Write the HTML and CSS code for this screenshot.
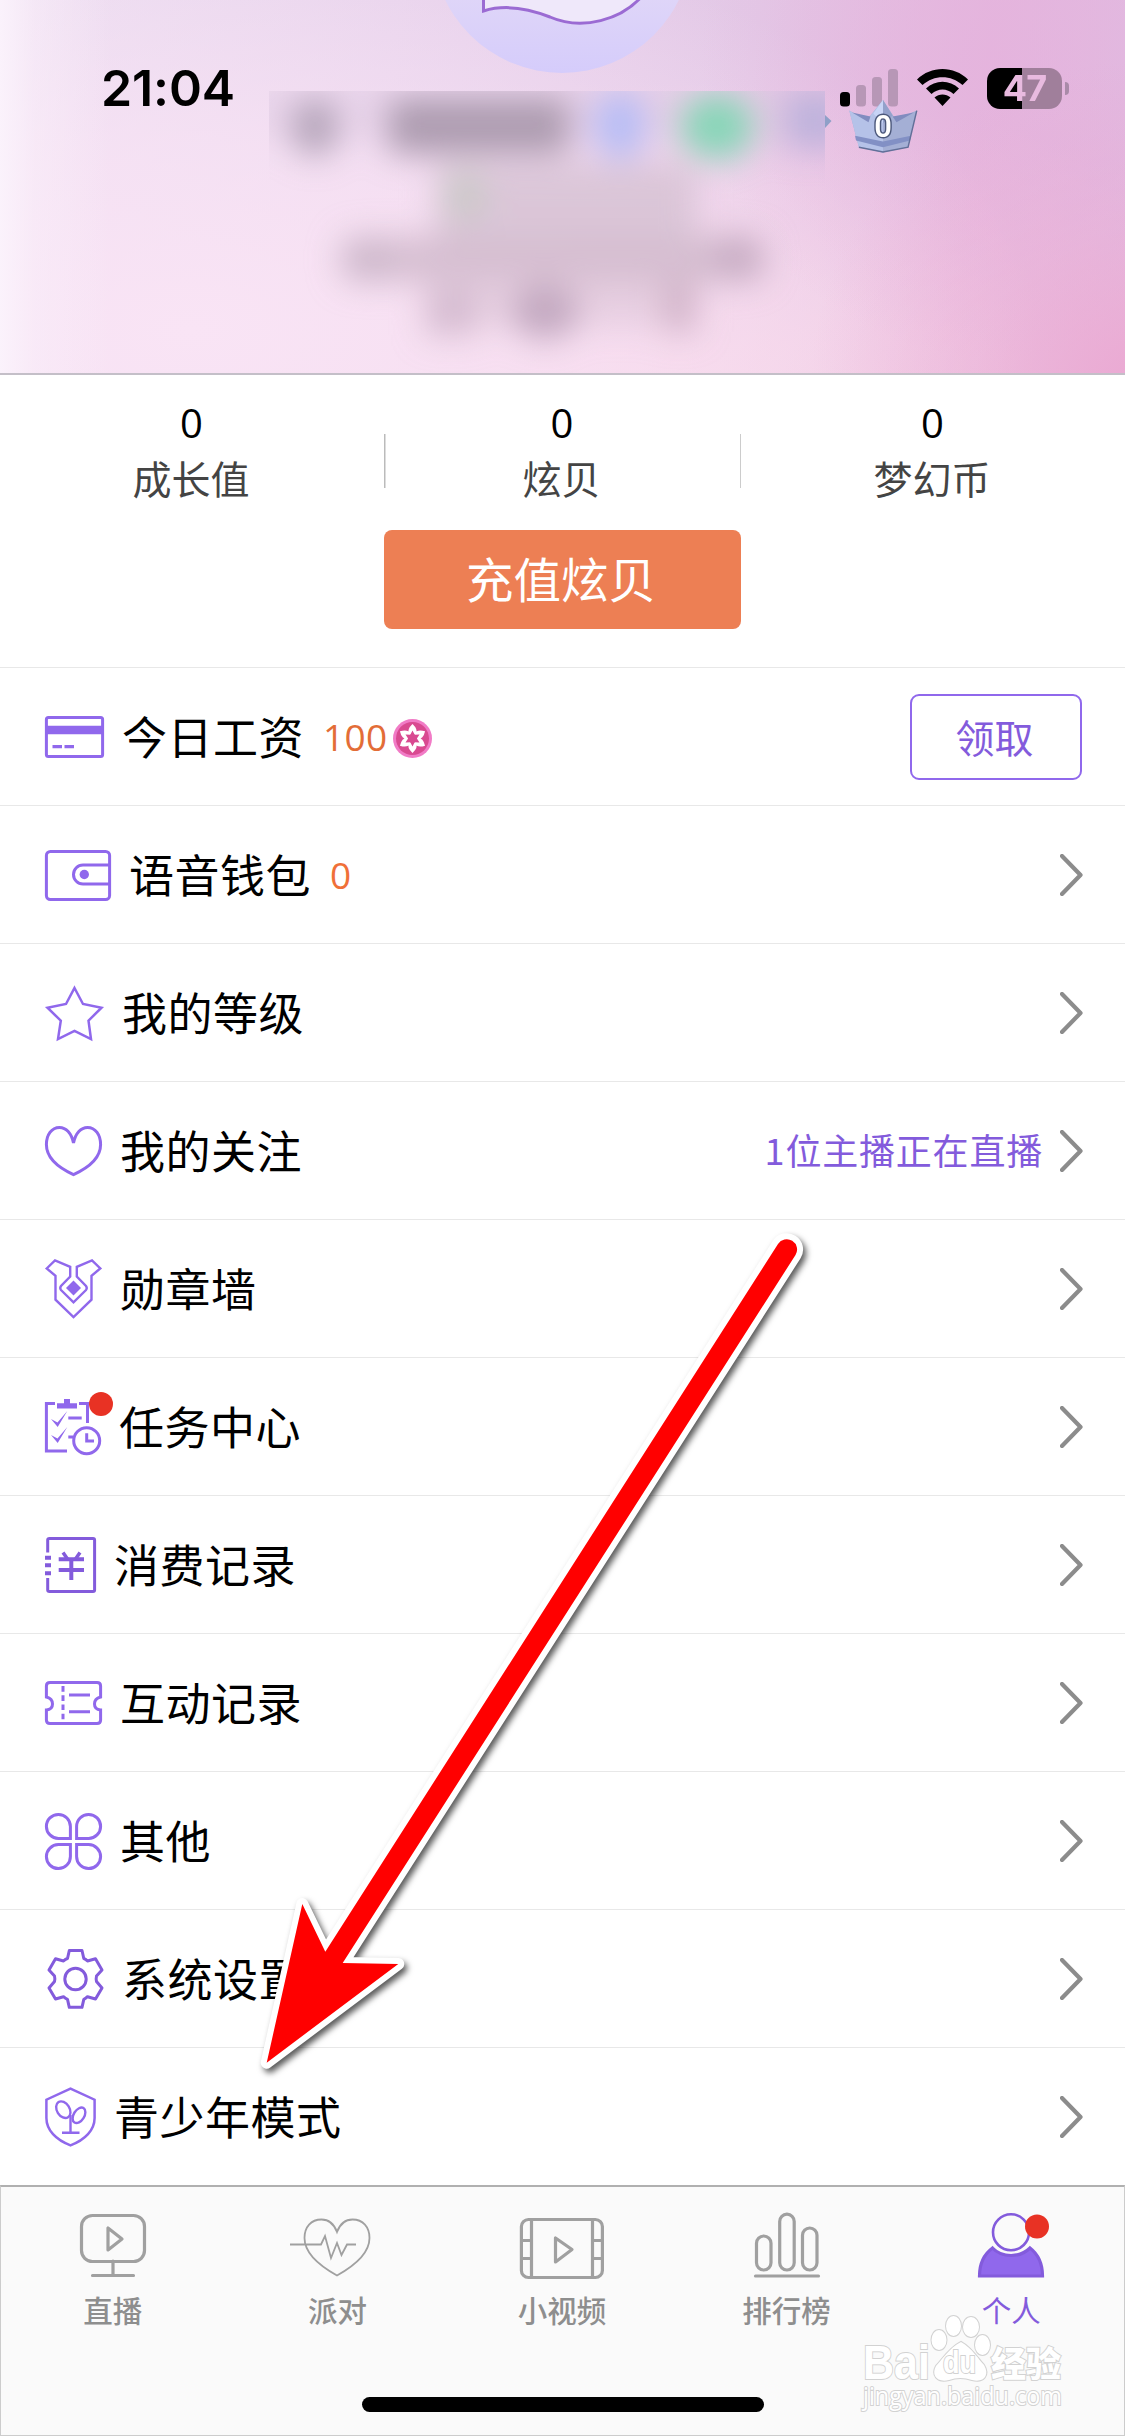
FILE: index.html
```html
<!DOCTYPE html>
<html lang="zh-CN">
<head>
<meta charset="utf-8">
<title>个人</title>
<link rel="stylesheet" href="styles.css">
</head>
<body>
<svg class="defs" width="0" height="0" aria-hidden="true">
  <symbol id="chevron" viewBox="0 0 23 42"><path d="M2 2 20.500 21 2 40" fill="none" stroke="#8c8c8c" stroke-width="4.200" stroke-linecap="round" stroke-linejoin="round"/></symbol>
</svg>
<div class="screen">
  <header class="hero">
    <svg class="hero-art" viewBox="0 0 1125 373">
      <defs>
        <linearGradient id="av" x1="0" y1="0" x2="0" y2="1"><stop offset=".5" stop-color="#e6dcf6"/><stop offset="1" stop-color="#d5ccfb"/></linearGradient>
        <filter id="soft" x="-30%" y="-60%" width="160%" height="220%"><feGaussianBlur stdDeviation="16"/></filter>
        <clipPath id="band"><rect x="269" y="91" width="556" height="282"/></clipPath>
      </defs>
      <circle cx="562" cy="-57" r="130" fill="url(#av)"/>
      <path d="M483.500-5V11C506 4 530 9 550 17C582 31 622 20 643-5Z" fill="#efe8fa" stroke="#9b6bd3" stroke-width="3"/>
      <g clip-path="url(#band)">
        <g filter="url(#soft)">
          <rect x="250" y="80" width="590" height="60" fill="#dcc8e0" opacity=".45"/>
          <ellipse cx="315" cy="127" rx="24" ry="29" fill="#b5a5ba"/>
          <rect x="388" y="98" width="182" height="56" rx="12" fill="#ad9cb0"/>
          <ellipse cx="620" cy="125" rx="27" ry="34" fill="#b7bdf5"/>
          <ellipse cx="717" cy="126" rx="38" ry="33" fill="#88d5b8"/>
          <rect x="785" y="92" width="60" height="56" fill="#beb2dc"/>
          <rect x="436" y="164" width="260" height="76" fill="#d6c2d3" opacity=".85"/>
          <ellipse cx="465" cy="195" rx="22" ry="25" fill="#cbc9c8"/>
          <rect x="340" y="236" width="425" height="46" rx="18" fill="#d0b8cb" opacity=".85"/>
          <ellipse cx="368" cy="260" rx="22" ry="18" fill="#ccb7ca"/>
          <ellipse cx="738" cy="257" rx="26" ry="21" fill="#c6abc2"/>
          <rect x="426" y="276" width="270" height="50" fill="#d8bfd2" opacity=".5"/>
          <rect x="426" y="292" width="50" height="43" fill="#cfb5ca" opacity=".8"/>
          <ellipse cx="545" cy="312" rx="34" ry="27" fill="#c2a8c0"/>
          <rect x="665" y="282" width="30" height="50" fill="#d0b2c7"/>
        </g>
      </g>
      <path d="M825 115 831.500 121 825 128Z" fill="#8fa0c8"/>
    </svg>
    <div class="status">
      <span class="time">21:04</span>
      <div class="indicators">
        <svg class="signal" width="58" height="38" viewBox="0 0 58 38"><rect y="23" width="10" height="14.500" rx="3.500"/><g fill="#b797b6"><rect x="16" y="16" width="10" height="21.500" rx="3.500"/><rect x="32" y="8" width="10" height="29.500" rx="3.500"/><rect x="48" y="0" width="10" height="37.500" rx="3.500"/></g></svg>
        <svg class="wifi" width="52" height="38" viewBox="0 0 52 38"><path d="M0 10.500C14-3.500 37-3.500 51 10.500L45.500 16C34 5.500 17 5.500 5.500 16ZM9 19.500C18.500 10.500 32.500 10.500 42 19.500L36.500 25C30 19 21 19 14.500 25ZM17.500 28.500C22 24.500 29 24.500 33.500 28.500L25.500 37Z"/></svg>
        <div class="battery"><span class="level">47</span></div>
        <span class="battery-cap"></span>
      </div>
    </div>
    <svg class="crown" viewBox="0 0 72 56">
      <path d="M1 11 19 21 36 0 49 20 71 11 62 49 36 54.500 11 49Z" fill="#a4afd5"/>
      <path d="M1 11 19 21 36 0V54.500L11 49Z" fill="#b5c2e8"/>
      <path d="M36 0 46 16 36 24Z" fill="#93a1cb"/><path d="M36 0 26 14 36 24Z" fill="#c8d4f6"/>
      <path d="M4 13 23 17 21 23ZM68 13 46 17 50 23Z" fill="#818cbf"/>
      <path d="M7 37 36 43 65 37 64 42 36 49 8 42Z" fill="#8290c5"/>
      <path d="M11 49 36 54 62 49 71 11" fill="none" stroke="#626f98" stroke-width="1.500"/>
      <text x="36" y="38.500" text-anchor="middle">0</text>
    </svg>
  </header>

  <section class="balance">
    <div class="stats">
      <div class="stat"><b>0</b><span>成长值</span></div>
      <div class="stat mid"><b>0</b><span>炫贝</span></div>
      <div class="stat"><b>0</b><span>梦幻币</span></div>
    </div>
    <button class="recharge">充值炫贝</button>
  </section>

  <main class="menu">
    <div class="row">
      <svg class="icon" width="59" height="42"><rect x="1.400" y="1.400" width="56.200" height="39.200" rx="2"/><path d="M1 14H58" stroke-width="8.500"/><path d="M7.500 30.700H17M19.500 30.700H29" stroke-width="3.200"/></svg>
      <span class="label">今日工资</span><span class="num">100</span>
      <svg class="coin" width="39" height="39" viewBox="-19.500 -19.500 39 39"><circle r="19.500" fill="#f17bc6"/><circle r="16.500" fill="#d94a91"/><g fill="#fff"><path d="M0-14.500Q6-9 3.500-4H-3.500Q-6-9 0-14.500Z"/><path transform="rotate(60)" d="M0-14.500Q6-9 3.500-4H-3.500Q-6-9 0-14.500Z"/><path transform="rotate(120)" d="M0-14.500Q6-9 3.500-4H-3.500Q-6-9 0-14.500Z"/><path transform="rotate(180)" d="M0-14.500Q6-9 3.500-4H-3.500Q-6-9 0-14.500Z"/><path transform="rotate(240)" d="M0-14.500Q6-9 3.500-4H-3.500Q-6-9 0-14.500Z"/><path transform="rotate(300)" d="M0-14.500Q6-9 3.500-4H-3.500Q-6-9 0-14.500Z"/></g><path fill="#d94a91" d="M0-8 2.200-3.800 7-4 4.400 0 7 4 2.200 3.800 0 8-2.200 3.800-7 4-4.400 0-7-4-2.200-3.800Z"/></svg>
      <button class="claim">领取</button>
    </div>
    <div class="row">
      <svg class="icon" width="66" height="51"><rect x="1.400" y="1.400" width="63.200" height="48.200" rx="4"/><path d="M65 15H38A9.500 9.500 0 0 0 38 34H65"/><circle class="fill" cx="39.300" cy="24.500" r="4.700"/></svg>
      <span class="label">语音钱包</span><span class="num bright">0</span>
      <svg class="chev"><use href="#chevron"/></svg>
    </div>
    <div class="row">
      <svg class="icon" width="59" height="56"><path stroke-width="2.500" d="M29.500 3 38 19 56.500 22.700 43.500 35.700 46 54 29.500 46 13 54 15.800 35.700 2.500 22.700 21 19Z"/></svg>
      <span class="label">我的等级</span>
      <svg class="chev"><use href="#chevron"/></svg>
    </div>
    <div class="row">
      <svg class="icon" width="57" height="50"><path d="M28.500 17C26.500 7 21 1.400 14.500 1.400C6.500 1.400 1.400 9 1.400 18.500C1.400 32 13 41.500 28.500 48.600C44 41.500 55.600 32 55.600 18.500C55.600 9 50.500 1.400 42.500 1.400C36 1.400 30.500 7 28.500 17Z"/></svg>
      <span class="label">我的关注</span>
      <span class="note">1位主播正在直播</span>
      <svg class="chev after-note"><use href="#chevron"/></svg>
    </div>
    <div class="row">
      <svg class="icon" width="57" height="60"><path stroke-width="2.400" d="M1.700 9.500 10 1.300 25.200 7.800V17.500L16 27Q14.500 29.200 16 31L28.500 43.300 41 31Q42.500 29.200 41 27L31.800 17.500V7.800L47 1.300 55.300 9.500 46.500 16.700V40.700L28.500 58 10.500 40.700V16.700Z"/><path class="fill" d="M28.500 21.500 36 29 28.500 36.500 21 29Z"/></svg>
      <span class="label">勋章墙</span>
      <svg class="chev"><use href="#chevron"/></svg>
    </div>
    <div class="row">
      <svg class="icon" width="56" height="56"><path d="M10 4.500H1.400V52H22M34 4.500H42.500V24M23.300 19H36.700M23.300 38H28M41.700 34.300V42H49"/><path class="fill" d="M12 4.300H19V0H25V4.300H32V9.500H12ZM6 20 12.500 23.500 22.300 12 12.700 28ZM6 36 12.500 39.500 22.300 28 12.700 44Z"/><circle cx="41.700" cy="41.700" r="13"/><circle class="dot" cx="56" cy="5" r="12"/></svg>
      <span class="label">任务中心</span>
      <svg class="chev"><use href="#chevron"/></svg>
    </div>
    <div class="row">
      <svg class="icon deep" width="51" height="56"><path d="M2.700 15.500V3Q2.700 1.500 4.500 1.500H48Q49.600 1.500 49.600 3V53Q49.600 54.500 48 54.500H4.500Q2.700 54.500 2.700 53V41"/><path stroke-width="4" d="M0 20.700H6M0 28.300H6M0 36.300H6M13.700 22.300H39M13.700 33H39M26.300 22V43"/><path stroke-width="3.500" d="M18 15.500 22.500 22M35 15.500 30.500 22"/></svg>
      <span class="label">消费记录</span>
      <svg class="chev"><use href="#chevron"/></svg>
    </div>
    <div class="row">
      <svg class="icon" width="57" height="44"><path d="M5 1.400H52Q55.600 1.400 55.600 5V16Q49.500 17.500 49.500 23T55.600 29V39Q55.600 42.600 52 42.600H5Q1.400 42.600 1.400 39V29Q7.500 28.500 7.500 23T1.400 16V5Q1.400 1.400 5 1.400Z"/><path d="M18 5V10.700M18 14.300V20M18 23.500V29M18 32.700V38.300M24 14H45M24 30.700H45"/></svg>
      <span class="label">互动记录</span>
      <svg class="chev"><use href="#chevron"/></svg>
    </div>
    <div class="row">
      <svg class="icon" width="57" height="57"><path d="M25.400 25.400H13.500A12 12 0 1 1 25.400 13.500ZM31.600 25.400V13.500A12 12 0 1 1 43.500 25.400ZM25.400 31.600V43.500A12 12 0 1 1 13.500 31.600ZM31.600 31.600H43.500A12 12 0 1 1 31.600 43.500Z"/></svg>
      <span class="label">其他</span>
      <svg class="chev"><use href="#chevron"/></svg>
    </div>
    <div class="row">
      <svg class="icon deep" width="59" height="60"><path stroke-linejoin="round" d="M24.300 1.500H37L38.800 9.500Q40.500 10 42.500 12L50.500 9.800 57 21 51.500 27Q50.800 30 51.500 32.500L57 39 50.500 50 42.500 47.700Q40.500 49.500 38.800 50.300L37 58.300H24.300L22.500 50.300Q20.500 49.500 18.500 47.700L10.500 50 4 39 9.500 32.500Q10.200 30 9.500 27L4 21 10.500 9.800 18.500 12Q20.500 10 22.500 9.500Z"/><circle cx="30.500" cy="30" r="10.700"/></svg>
      <span class="label">系统设置</span>
      <svg class="chev"><use href="#chevron"/></svg>
    </div>
    <div class="row">
      <svg class="icon" width="51" height="60"><path stroke-width="2.500" d="M25.500 1.700 49.600 12.700V31C49.600 43 40 53 25.500 58.300C11 53 1.400 43 1.400 31V12.700Z"/><g stroke-width="2.400"><ellipse cx="18.300" cy="22.700" rx="6.300" ry="9" transform="rotate(-32 18.300 22.700)"/><ellipse cx="34" cy="28.300" rx="5.300" ry="8.500" transform="rotate(32 34 28.300)"/><path d="M25.500 28V46M17 45.800H34.500"/></g></svg>
      <span class="label">青少年模式</span>
      <svg class="chev"><use href="#chevron"/></svg>
    </div>
  </main>

  <footer class="dock">
    <nav class="tabs">
      <a class="tab"><svg width="66" height="66"><rect x="1.500" y="3.500" width="63" height="46" rx="11"/><path d="M28 16V38L42 27ZM33 49V63M12.500 63.500H53.500" stroke-linejoin="round" stroke-linecap="round"/></svg><span>直播</span></a>
      <a class="tab"><svg class="thin" width="84" height="66"><path d="M42 20C39 12 34 7.500 26.500 7.500C16 7.500 9.500 15 9.500 26C9.500 42 25 54 42 63.500C59 54 74.500 42 74.500 26C74.500 15 68 7.500 57.500 7.500C50 7.500 45 12 42 20ZM-5 32.500H26L30 24 36 46 42 31 46.500 43 52 32.500H61"/></svg><span>派对</span></a>
      <a class="tab"><svg width="84" height="66"><rect x="1.400" y="7.500" width="81" height="58" rx="7"/><path d="M11.500 8V65M72.500 8V65M1 28.500H11M1 46.500H11M73 28.500H83M73 46.500H83M35.500 26V50L52 37.500Z" stroke-linejoin="round"/></svg><span>小视频</span></a>
      <a class="tab"><svg width="66" height="66"><rect x="2.500" y="24" width="14.500" height="34" rx="7.200"/><rect x="25.700" y="2.200" width="14.500" height="55.800" rx="7.200"/><rect x="48.500" y="16" width="14.500" height="42" rx="7.200"/><path d="M1.500 64H64.500" stroke-linecap="round"/></svg><span>排行榜</span></a>
      <a class="tab active"><svg width="66" height="66"><circle cx="33" cy="20.300" r="18" stroke-width="2.600"/><path class="body" d="M1.500 64C1.500 52 5 43 14.500 36C24 46 42 46 52 36C61 43 64.500 52 64.500 64Z"/><circle class="dot" cx="59" cy="14.500" r="12"/></svg><span>个人</span></a>
    </nav>
    <div class="home-bar"></div>
  </footer>

  <svg class="watermark" viewBox="0 0 210 104">
    <g class="wm">
      <text x="1" y="67" class="bai" textLength="67" lengthAdjust="spacingAndGlyphs">Bai</text>
      <path d="M74 54C79 49 87 36 99 30C110 36 117 48 122 53C128 63 122 71 110 68Q98 64 87 68C75 71 69 63 74 54Z"/>
      <ellipse cx="77" cy="28" rx="7.500" ry="10"/><ellipse cx="91.500" cy="14" rx="7.500" ry="10"/><ellipse cx="109" cy="15" rx="8" ry="10"/><ellipse cx="120.500" cy="33" rx="7.500" ry="10"/>
      <text x="81" y="61" class="du" textLength="33" lengthAdjust="spacingAndGlyphs">du</text>
      <text x="129" y="65" class="jy">经验</text>
      <text x="1" y="93" class="url" textLength="199" lengthAdjust="spacingAndGlyphs">jingyan.baidu.com</text>
    </g>
  </svg>

  <svg class="arrow" viewBox="240 1210 590 890">
    <path d="M266.700 2062.700 302.300 1904 325.300 1951.700 778 1244A10.300 10.300 0 0 1 795.500 1255L342.700 1963 398.300 1964Z" fill="#f00" stroke="#fff" stroke-width="12" stroke-linejoin="round" paint-order="stroke"/>
  </svg>
</div>
</body>
</html>
```
FILE: styles.css
```css
* { box-sizing: border-box; }
body { margin: 0; background: #fff; font-family: "Noto Sans CJK SC", sans-serif; color: #000; }
button { font: inherit; padding: 0; }
.defs { position: absolute; }
.screen { position: relative; width: 1125px; height: 2436px; overflow: hidden; display: flex; flex-direction: column; }

.hero {
  position: relative; height: 375px; border-bottom: 2px solid #c4bfc8;
  background:
    linear-gradient(90deg, rgba(251,243,252,.95) 0, rgba(250,240,250,.5) 35px, rgba(250,240,250,0) 110px),
    radial-gradient(ellipse 330px 330px at 1140px 390px, #eba8d2 0%, rgba(235,168,210,.4) 50%, rgba(235,168,210,0) 100%),
    radial-gradient(ellipse 300px 300px at 1000px 60px, rgba(229,178,221,.7) 0%, rgba(229,178,221,0) 100%),
    radial-gradient(ellipse 850px 420px at 190px 330px, #f9e4f5 0%, rgba(249,228,245,.7) 45%, rgba(249,228,245,0) 100%),
    radial-gradient(ellipse 650px 330px at 680px 410px, #f7d3e6 0%, rgba(247,211,230,0) 100%),
    linear-gradient(97deg, #ecdef1 0%, #e6d0eb 40%, #e3c8e6 65%, #e4b8de 85%, #dfbde2 100%);
}
.hero-art { position: absolute; left: 0; top: 0; width: 1125px; height: 373px; }
.status { position: relative; display: flex; justify-content: space-between; align-items: center; padding: 59px 56px 0 101px; }
.time { font: 600 50px/58px Inter, sans-serif; letter-spacing: -.1px; }
.indicators { display: flex; align-items: center; }
.wifi { margin-left: 19px; }
.battery { width: 75px; height: 41px; margin-left: 18px; border-radius: 13px; background: linear-gradient(90deg, #000 35px, #a07f9b 35px); display: flex; justify-content: center; align-items: center; }
.level { font: 700 36px/41px Inter, sans-serif; color: #e8badf; letter-spacing: -1px; }
.battery-cap { width: 4px; height: 13px; margin-left: 3px; background: #a98aa8; border-radius: 0 5px 5px 0; }
.crown { position: absolute; left: 847px; top: 100px; width: 72px; height: 54px; }
.crown text { font: 600 32px Roboto, sans-serif; fill: #fff; stroke: #4c587b; stroke-width: 3px; paint-order: stroke; }

.balance { height: 293px; border-bottom: 1px solid #e8e8e8; display: flex; flex-direction: column; align-items: center; }
.stats { width: 1125px; height: 155px; display: grid; grid-template-columns: 384px 357px 384px; }
.stat { display: flex; flex-direction: column; align-items: center; padding: 22px 1px 0 0; }
.stat b { font: 400 40px/52px "Open Sans", sans-serif; }
.stat span { font-size: 39px; line-height: 56px; padding-right: 1px; color: #444; }
.mid { background: linear-gradient(#bbb, #bbb) 0 59px / 1.500px 54px no-repeat, linear-gradient(#ccc, #ccc) 100% 59px / 1px 54px no-repeat; }
.recharge { width: 357px; height: 99px; border: 0; border-radius: 8px; background: #ed7f54; color: #fff; font-size: 47.500px; line-height: 92px; padding: 0 3px 4px 0; }

.row { display: flex; align-items: center; height: 138px; padding: 1px 42px 0 45px; border-bottom: 1px solid #e8e8e8; }
.row:last-child { height: 137px; border-bottom: 0; }
.icon { flex: none; overflow: visible; fill: none; stroke: #9068ec; stroke-width: 3px; }
.deep { stroke: #835bdc; }
.icon .fill { fill: #9068ec; stroke: none; }
.icon .dot, .tab .dot { fill: #e83224; stroke: none; }
.label { margin-left: 18px; font-size: 45px; line-height: 64px; letter-spacing: .5px; padding-bottom: 3px; }
.num { margin-left: 19px; font: 400 37px/48px "Open Sans", sans-serif; letter-spacing: .3px; color: #e36d37; }
.bright { color: #f07038; }
.coin { margin-left: 6px; margin-top: 2px; }
.claim { margin-left: auto; margin-right: 1px; width: 172px; height: 86px; border: 2px solid #9068ec; border-radius: 9px; background: #fff; color: #835bdc; font-size: 39px; line-height: 76px; padding: 0 3px 2px 0; }
.chev { width: 23px; height: 42px; margin-left: auto; }
.note { margin-left: auto; font-size: 36px; letter-spacing: .8px; color: #835bdc; padding-bottom: 4px; }
.after-note { margin-left: 17px; }

.dock { height: 251px; border: 1px solid #ccc; border-top: 2px solid #b0b0b0; background: #fafafa; display: flex; flex-direction: column; align-items: center; }
.tabs { width: 1123px; height: 210px; display: flex; }
.tab { flex: 1; display: flex; flex-direction: column; align-items: center; padding: 25px 1px 0 0; color: #8e8e8e; }
.tab svg { overflow: visible; fill: none; stroke: #a0a0a0; stroke-width: 3.200px; }
.tab .thin { stroke-width: 1.800px; }
.tab span { font-size: 29.500px; line-height: 44px; margin-top: 9px; font-weight: 500; }
.active { color: #835bdc; }
.active span { font-weight: 400; }
.active svg { stroke: #835bdc; }
.tab .body { fill: #9068ec; }
.home-bar { width: 402px; height: 15px; border-radius: 8px; background: #000; }

.watermark { position: absolute; left: 862px; top: 2312px; width: 210px; height: 104px; overflow: visible; }
.wm { fill: #fff; stroke: #d2d2d2; stroke-width: 2px; paint-order: stroke; }
.bai { font: 700 48px "Liberation Sans", sans-serif; }
.du { font: 700 31px "Liberation Sans", sans-serif; }
.jy { font: 900 35px "Noto Sans CJK SC", sans-serif; }
.url { font: 400 25px "Open Sans", sans-serif; }
.arrow { position: absolute; left: 240px; top: 1210px; width: 590px; height: 890px; filter: drop-shadow(3px 4px 3px rgba(0,0,0,.65)); }
```
